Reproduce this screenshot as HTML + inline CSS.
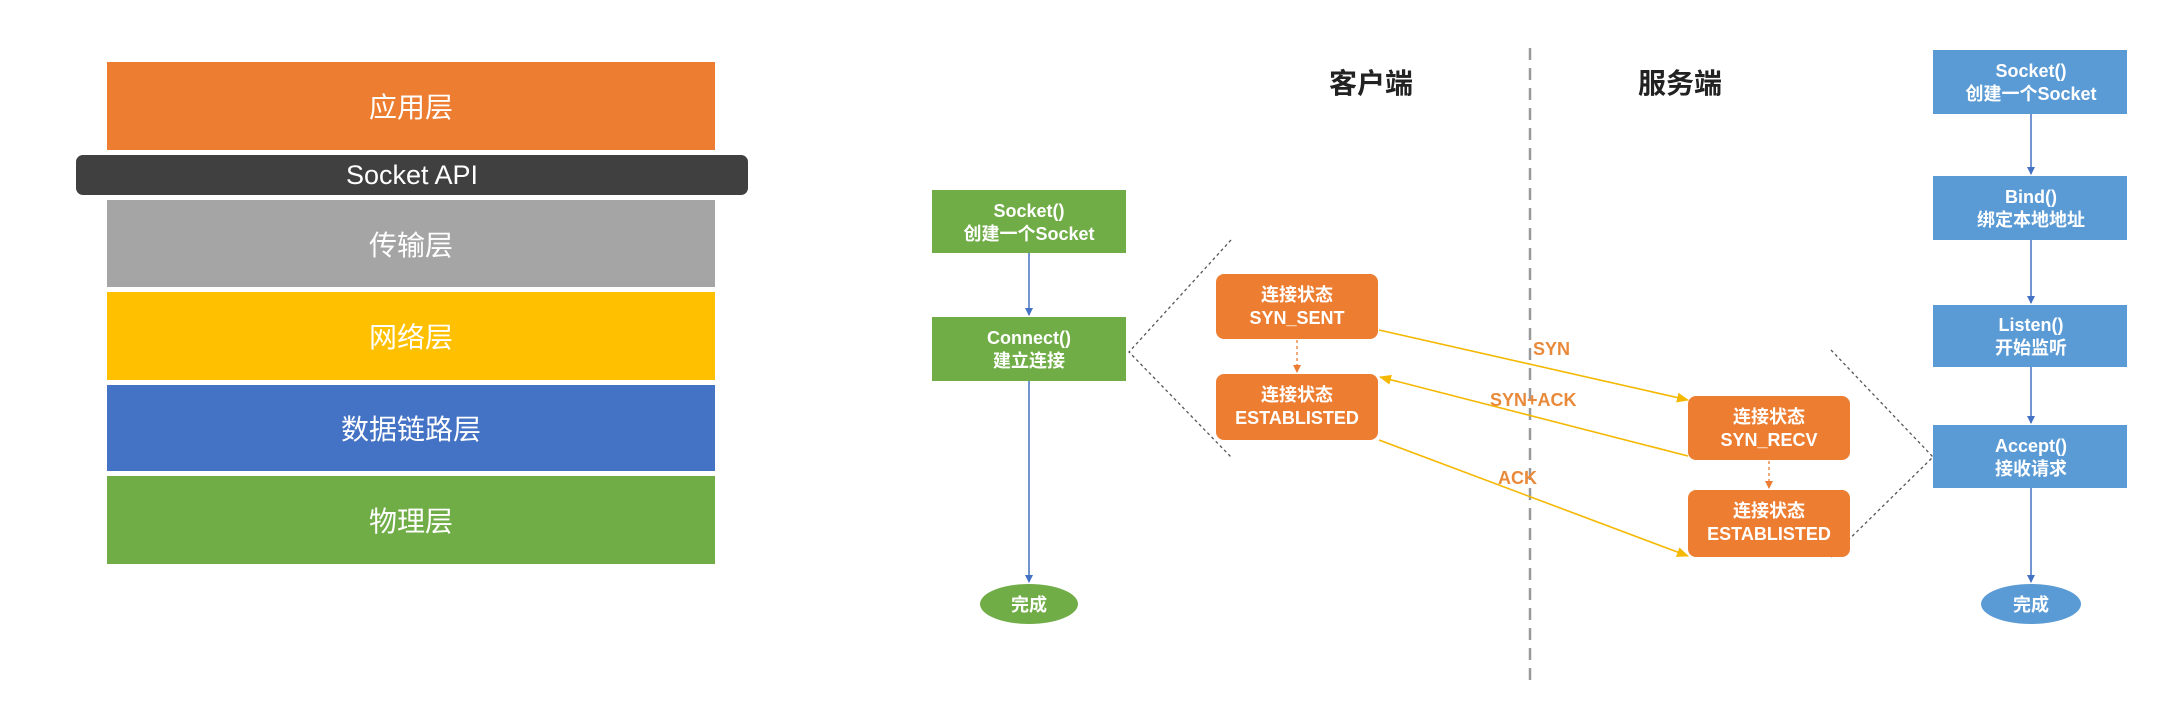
<!DOCTYPE html>
<html><head><meta charset="utf-8"><style>
html,body{margin:0;padding:0;background:#fff;}
body{width:2172px;height:722px;overflow:hidden;position:relative;font-family:"Liberation Sans","Noto Sans CJK SC",sans-serif;}
.l{position:absolute;left:107px;width:608px;color:#fff;font-size:28px;display:flex;align-items:center;justify-content:center;}
svg{position:absolute;left:0;top:0;}
svg text{font-family:"Liberation Sans","Noto Sans CJK SC",sans-serif;}
</style></head><body>
<div class="l" style="top:62px;height:88px;background:#ed7d31">应用层</div>
<div class="l" style="left:76px;width:672px;top:155px;height:40px;background:#404040;border-radius:7px;font-size:27px">Socket API</div>
<div class="l" style="top:200px;height:87px;background:#a5a5a5">传输层</div>
<div class="l" style="top:292px;height:88px;background:#ffc000">网络层</div>
<div class="l" style="top:385px;height:86px;background:#4472c4">数据链路层</div>
<div class="l" style="top:476px;height:88px;background:#70ad47">物理层</div>
<svg width="2172" height="722" viewBox="0 0 2172 722">
<defs>
<marker id="ab" markerWidth="8" markerHeight="8" refX="7" refY="4" orient="auto" markerUnits="userSpaceOnUse"><path d="M0,0 L8,4 L0,8z" fill="#4472c4"/></marker>
<marker id="ay" markerWidth="12" markerHeight="10" refX="11" refY="5" orient="auto" markerUnits="userSpaceOnUse"><path d="M0,0 L12,5 L0,10z" fill="#f5b800"/></marker>
<marker id="ao" markerWidth="8" markerHeight="8" refX="7" refY="4" orient="auto" markerUnits="userSpaceOnUse"><path d="M0,0 L8,4 L0,8z" fill="#ed7d31"/></marker>
</defs>
<line x1="1530" y1="48" x2="1530" y2="681" stroke="#999" stroke-width="2.5" stroke-dasharray="12,8"/>
<g font-size="28" font-weight="bold" fill="#222" text-anchor="middle">
<text x="1371" y="93">客户端</text><text x="1680" y="93">服务端</text></g>
<!-- client -->
<g fill="#70ad47"><rect x="932" y="190" width="194" height="63"/><rect x="932" y="317" width="194" height="64"/><ellipse cx="1029" cy="604" rx="49" ry="20"/></g>
<g stroke="#4472c4" stroke-width="1.5"><line x1="1029" y1="253" x2="1029" y2="315" marker-end="url(#ab)"/><line x1="1029" y1="381" x2="1029" y2="582" marker-end="url(#ab)"/></g>
<g fill="#fff" font-size="18" font-weight="bold" text-anchor="middle">
<text x="1029" y="217">Socket()</text><text x="1029" y="240">创建一个Socket</text>
<text x="1029" y="344">Connect()</text><text x="1029" y="367">建立连接</text>
<text x="1029" y="611">完成</text></g>
<g stroke="#555" stroke-width="1.3" stroke-dasharray="3,3" fill="none"><path d="M1231,240 L1129,352 L1231,457"/><path d="M1831,350 L1933,457 L1831,557"/></g>
<!-- orange -->
<g fill="#ed7d31"><rect x="1216" y="274" width="162" height="65" rx="8"/><rect x="1216" y="374" width="162" height="66" rx="8"/><rect x="1688" y="396" width="162" height="64" rx="8"/><rect x="1688" y="490" width="162" height="67" rx="8"/></g>
<g stroke="#ed7d31" stroke-width="1.3" stroke-dasharray="3,3"><line x1="1297" y1="340" x2="1297" y2="372" marker-end="url(#ao)"/><line x1="1769" y1="461" x2="1769" y2="488" marker-end="url(#ao)"/></g>
<g fill="#fff" font-size="18" font-weight="bold" text-anchor="middle">
<text x="1297" y="301">连接状态</text><text x="1297" y="324">SYN_SENT</text>
<text x="1297" y="401">连接状态</text><text x="1297" y="424">ESTABLISTED</text>
<text x="1769" y="423">连接状态</text><text x="1769" y="446">SYN_RECV</text>
<text x="1769" y="517">连接状态</text><text x="1769" y="540">ESTABLISTED</text></g>
<g stroke="#f5b800" stroke-width="1.6"><line x1="1379" y1="330" x2="1688" y2="400" marker-end="url(#ay)"/><line x1="1688" y1="456" x2="1380" y2="377" marker-end="url(#ay)"/><line x1="1379" y1="440" x2="1688" y2="556" marker-end="url(#ay)"/></g>
<g fill="#e98a3a" font-size="18" font-weight="bold">
<text x="1533" y="355">SYN</text><text x="1490" y="406">SYN+ACK</text><text x="1498" y="484">ACK</text></g>
<!-- server -->
<g fill="#5b9bd5"><rect x="1933" y="50" width="194" height="64"/><rect x="1933" y="176" width="194" height="64"/><rect x="1933" y="305" width="194" height="62"/><rect x="1933" y="425" width="194" height="63"/><ellipse cx="2031" cy="604" rx="50" ry="20"/></g>
<g stroke="#4472c4" stroke-width="1.5"><line x1="2031" y1="114" x2="2031" y2="174" marker-end="url(#ab)"/><line x1="2031" y1="240" x2="2031" y2="303" marker-end="url(#ab)"/><line x1="2031" y1="367" x2="2031" y2="423" marker-end="url(#ab)"/><line x1="2031" y1="488" x2="2031" y2="582" marker-end="url(#ab)"/></g>
<g fill="#fff" font-size="18" font-weight="bold" text-anchor="middle">
<text x="2031" y="77">Socket()</text><text x="2031" y="100">创建一个Socket</text>
<text x="2031" y="203">Bind()</text><text x="2031" y="226">绑定本地地址</text>
<text x="2031" y="331">Listen()</text><text x="2031" y="354">开始监听</text>
<text x="2031" y="452">Accept()</text><text x="2031" y="475">接收请求</text>
<text x="2031" y="611">完成</text></g>
</svg>
</body></html>
